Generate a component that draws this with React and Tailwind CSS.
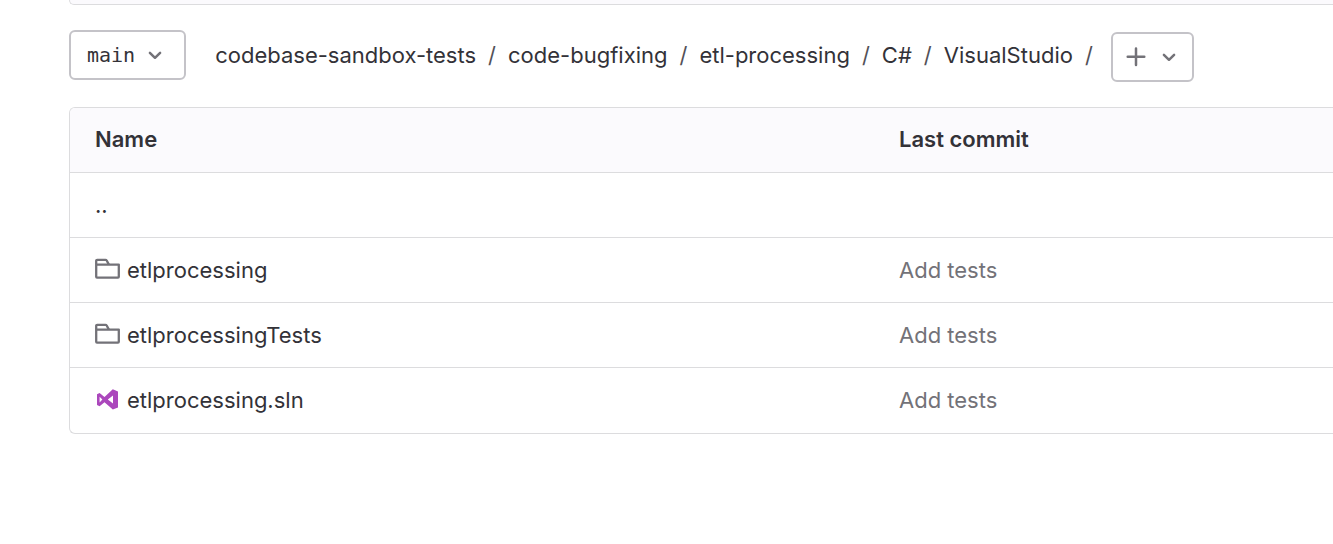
const path = ['codebase-sandbox-tests', 'code-bugfixing', 'etl-processing', 'C#', 'VisualStudio'];

const files = [
  { name: 'etlprocessing', Icon: FolderIcon, commit: 'Add tests' },
  { name: 'etlprocessingTests', Icon: FolderIcon, commit: 'Add tests' },
  { name: 'etlprocessing.sln', Icon: SolutionIcon, commit: 'Add tests' },
];

function FolderIcon() {
  return (
    <svg className="h-[26px] w-[26px] shrink-0 text-[#737278]" viewBox="0 0 26 26" fill="none" stroke="currentColor" strokeWidth="2.3" strokeLinejoin="round" aria-hidden="true">
      <path d="M1.2 7.6V3.8c0-.6.4-1 1-1h8.3c.5 0 .9.2 1.2.7l2.2 4.1" />
      <path d="M1.2 7.6h22.6v12.2c0 .5-.3.8-.8.8H2c-.5 0-.8-.3-.8-.8z" />
    </svg>
  );
}

function SolutionIcon() {
  return (
    <svg className="h-[26px] w-[26px] shrink-0 text-[#ab47bc]" viewBox="0 0 26 26" fill="currentColor" fillRule="evenodd" aria-hidden="true">
      <path d="M17.8 2.2 23 4.4v16l-5.2 2.2-8.3-7.3-4.9 3.9L2 17.9V7.3L4.6 6l4.9 3.9zM18 8.6l-5.2 4 5.2 4zM4.6 9.7v5.8l2.8-2.9z" />
    </svg>
  );
}

function Chevron() {
  return (
    <svg className="h-[26px] w-[26px] text-[#737278]" viewBox="0 0 26 26" fill="none" stroke="currentColor" strokeWidth="2.5" strokeLinecap="round" strokeLinejoin="round" aria-hidden="true">
      <path d="m7.9 10.8 5.1 5 5.1-5" />
    </svg>
  );
}

function Plus() {
  return (
    <svg className="h-[26px] w-[26px] text-[#737278]" viewBox="0 0 26 26" fill="none" stroke="currentColor" strokeWidth="2.5" strokeLinecap="round" aria-hidden="true">
      <path d="M13 4.4v16.6M4.7 12.7h16.6" />
    </svg>
  );
}

export default function App() {
  return (
    <main className="min-h-screen overflow-x-hidden bg-white pl-[69px] font-['Inter','Liberation_Sans',sans-serif] text-[22px] leading-8 text-[#333238]">
      <div className="h-[5px] rounded-bl-md border-b border-l border-[#dcdcde] bg-[#fbfafd]" />

      <div className="flex items-start pt-[25px]">
        <button type="button" className="flex h-[50px] items-center rounded-md border-2 border-[#c4c3c8] bg-white px-4 font-['DejaVu_Sans_Mono','Liberation_Mono',monospace] text-xl">
          main
          <span className="ml-[7px]"><Chevron /></span>
        </button>
        <nav aria-label="Files breadcrumb" className="ml-[29px] pt-[9px]">
          <ol className="flex whitespace-nowrap">
            {path.map((part) => (
              <li key={part} className="flex">
                <a href="#">{part}</a>
                <span className="mx-3 text-[#535158]">/</span>
              </li>
            ))}
          </ol>
        </nav>
        <button type="button" aria-label="Add to tree" className="ml-[6px] mt-[2px] flex h-[50px] items-center gap-[7px] rounded-md border-2 border-[#c4c3c8] bg-white px-[10px]">
          <Plus />
          <Chevron />
        </button>
      </div>

      <div className="mt-[25px] overflow-hidden rounded-l-md border border-r-0 border-[#dcdcde]">
        <table className="w-full table-fixed border-collapse text-left">
          <thead>
            <tr className="h-16 border-b border-[#dcdcde] bg-[#fbfafd]">
              <th scope="col" className="w-[804px] px-[25px] pb-[2px] font-semibold">Name</th>
              <th scope="col" className="px-[25px] pb-[2px] font-semibold">Last commit</th>
            </tr>
          </thead>
          <tbody>
            <tr className="h-[65px] border-b border-[#dcdcde]">
              <td colSpan={2} className="px-[25px]"><a href="#" aria-label="Go to parent">..</a></td>
            </tr>
            {files.map(({ name, Icon, commit }) => (
              <tr key={name} className="h-[65px] border-b border-[#dcdcde] last:h-[66px] last:border-b-0">
                <td className="px-[25px]">
                  <a href="#" className="flex items-center gap-[6px]">
                    <Icon />
                    <span>{name}</span>
                  </a>
                </td>
                <td className="px-[25px]"><a href="#" className="text-[#737278]">{commit}</a></td>
              </tr>
            ))}
          </tbody>
        </table>
      </div>
    </main>
  );
}
